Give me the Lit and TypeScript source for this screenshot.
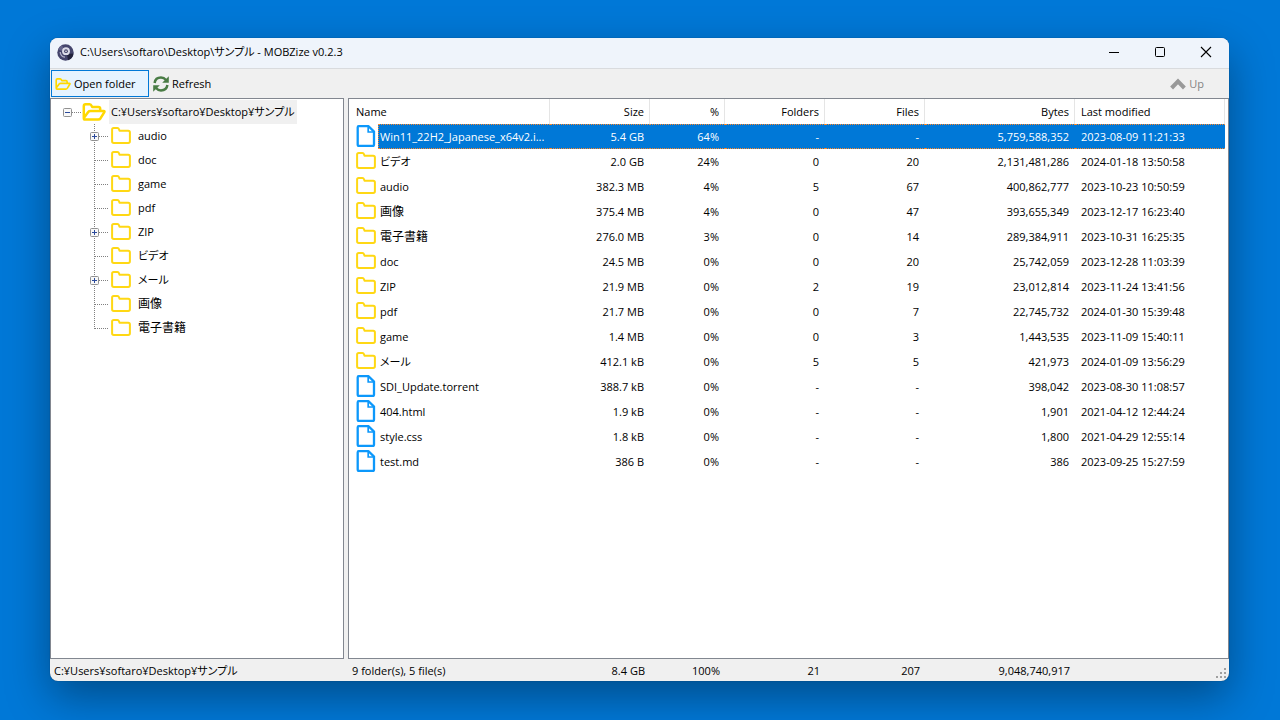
import { LitElement, html, css, svg, nothing } from "lit";
import { customElement, property } from "lit/decorators.js";
import { classMap } from "lit/directives/class-map.js";

interface Entry {
  name: string;
  kind: "file" | "folder";
  size: string;
  percent: string;
  folders: string;
  files: string;
  bytes: string;
  modified: string;
}

const row = (kind: "file" | "folder", ...v: string[]): Entry => ({
  kind,
  name: v[0],
  size: v[1],
  percent: v[2],
  folders: v[3],
  files: v[4],
  bytes: v[5],
  modified: v[6],
});

const ENTRIES: Entry[] = [
  row("file", "Win11_22H2_Japanese_x64v2.i...", "5.4 GB", "64%", "-", "-", "5,759,588,352", "2023-08-09 11:21:33"),
  row("folder", "ビデオ", "2.0 GB", "24%", "0", "20", "2,131,481,286", "2024-01-18 13:50:58"),
  row("folder", "audio", "382.3 MB", "4%", "5", "67", "400,862,777", "2023-10-23 10:50:59"),
  row("folder", "画像", "375.4 MB", "4%", "0", "47", "393,655,349", "2023-12-17 16:23:40"),
  row("folder", "電子書籍", "276.0 MB", "3%", "0", "14", "289,384,911", "2023-10-31 16:25:35"),
  row("folder", "doc", "24.5 MB", "0%", "0", "20", "25,742,059", "2023-12-28 11:03:39"),
  row("folder", "ZIP", "21.9 MB", "0%", "2", "19", "23,012,814", "2023-11-24 13:41:56"),
  row("folder", "pdf", "21.7 MB", "0%", "0", "7", "22,745,732", "2024-01-30 15:39:48"),
  row("folder", "game", "1.4 MB", "0%", "0", "3", "1,443,535", "2023-11-09 15:40:11"),
  row("folder", "メール", "412.1 kB", "0%", "5", "5", "421,973", "2024-01-09 13:56:29"),
  row("file", "SDI_Update.torrent", "388.7 kB", "0%", "-", "-", "398,042", "2023-08-30 11:08:57"),
  row("file", "404.html", "1.9 kB", "0%", "-", "-", "1,901", "2021-04-12 12:44:24"),
  row("file", "style.css", "1.8 kB", "0%", "-", "-", "1,800", "2021-04-29 12:55:14"),
  row("file", "test.md", "386 B", "0%", "-", "-", "386", "2023-09-25 15:27:59"),
];

const TREE = [
  { name: "audio", expandable: true },
  { name: "doc", expandable: false },
  { name: "game", expandable: false },
  { name: "pdf", expandable: false },
  { name: "ZIP", expandable: true },
  { name: "ビデオ", expandable: false },
  { name: "メール", expandable: true },
  { name: "画像", expandable: false },
  { name: "電子書籍", expandable: false },
];

const isKanji = (s: string) => /[\u4e00-\u9fff]/.test(s);

const folderIcon = html`<svg class="icon" width="20" height="20" viewBox="0 0 20 20" aria-hidden="true">
  <path d="M1.1 3.6 Q1.1 2 2.7 2 H6.4 Q7.6 2 8 3.2 L8.5 4.8 H17.2 Q18.9 4.8 18.9 6.5 V15.3 Q18.9 17 17.2 17 H2.8 Q1.1 17 1.1 15.3 Z" fill="#fff" stroke="#ffd814" stroke-width="2" stroke-linejoin="round"/>
</svg>`;

const openFolder = (w: number, h: number) => html`<svg class="icon" width=${w} height=${h} viewBox="0 0 24 18" aria-hidden="true">
  <path d="M1.8 14.5 V3.2 Q1.8 1.3 3.6 1.3 H7.6 Q9 1.3 9.8 3.2 L10.2 4 H16.4 Q18.2 4 18.2 5.8 V8 M1.8 15 L6.2 9 Q7 8 8.4 8 H21.6 Q23 8 22.2 9.3 L18.6 15.2 Q17.7 16.6 16.2 16.6 H3 Q1.8 16.6 1.8 15 Z" fill="none" stroke="#ffd800" stroke-width="2.5" stroke-linejoin="round" stroke-linecap="round"/>
</svg>`;

const fileIcon = html`<svg class="icon" width="20" height="25" viewBox="0 0 20 25" aria-hidden="true">
  <path d="M2.7 2.2 H12.6 L18 7.6 V20.4 Q18 21.8 16.7 21.8 H3 Q1.7 21.8 1.7 20.4 V3.4 Q1.7 2.2 2.7 2.2 Z" fill="#fff" stroke="#0c98fb" stroke-width="2.3" stroke-linejoin="round"/>
  <path d="M12.2 2.6 V8 H17.6" fill="none" stroke="#0c98fb" stroke-width="1.7"/>
</svg>`;

const expander = (x: number, plus: boolean) => svg`
  <rect x=${x + 0.5} y="8.5" width="8" height="8" rx="1" fill="#f8f8f8" stroke="#919191"/>
  <path d="M${x + 2} 12.5 H${x + 7}" stroke="#2b4a9b"/>
  ${plus ? svg`<path d="M${x + 4.5} 10 V15" stroke="#2b4a9b"/>` : nothing}`;

@customElement("folder-tree")
export class FolderTree extends LitElement {
  static styles = css`
    :host {
      display: block;
      padding-top: 1px;
    }
    ul {
      list-style: none;
      margin: 0;
      padding: 0;
    }
    .node {
      display: flex;
      align-items: center;
      height: 24px;
      padding-left: 39px;
    }
    .root {
      padding-left: 11px;
    }
    .guide {
      display: block;
      width: 21px;
      height: 24px;
      margin: 0;
      padding: 0;
      border: 0;
      background: none;
    }
    .guide svg,
    .icon {
      display: block;
      flex: none;
    }
    .root .guide {
      width: 20px;
    }
    .label {
      color: #000;
      text-decoration: none;
      line-height: 24px;
      padding: 0 2px;
      margin-left: 5px;
      white-space: nowrap;
    }
    .root .label {
      background: #f0f0f0;
      margin-left: 3px;
    }
    .kanji {
      font-size: 12px;
    }
  `;

  private guide(last: boolean, expandable: boolean) {
    return html`<svg width="21" height="24" viewBox="0 0 21 24" aria-hidden="true">
      <path d="M4.5 0 V${last ? 13 : 24}" stroke="#808080" stroke-dasharray="1 1"/>
      <path d="M5 12.5 H19" stroke="#808080" stroke-dasharray="1 1"/>
      ${expandable ? expander(0, true) : nothing}
    </svg>`;
  }

  render() {
    return html`
      <div class="node root">
        <button class="guide" aria-label="Collapse">
          <svg width="20" height="24" viewBox="0 0 20 24" aria-hidden="true">
            <path d="M10 12.5 H20" stroke="#808080" stroke-dasharray="1 1"/>
            ${expander(1, false)}
          </svg>
        </button>
        ${openFolder(24, 18)}
        <a class="label" href="#root">C:¥Users¥softaro¥Desktop¥サンプル</a>
      </div>
      <ul>
        ${TREE.map((n, i) => {
          const g = this.guide(i === TREE.length - 1, n.expandable);
          return html`<li class="node">
            ${n.expandable
              ? html`<button class="guide" aria-label="Expand ${n.name}">${g}</button>`
              : html`<span class="guide">${g}</span>`}
            ${folderIcon}
            <a class=${classMap({ label: true, kanji: isKanji(n.name) })} href="#${n.name}">${n.name}</a>
          </li>`;
        })}
      </ul>
    `;
  }
}

@customElement("file-table")
export class FileTable extends LitElement {
  @property({ type: Number }) selected = 0;

  static styles = css`
    :host {
      display: block;
      padding: 0 3px 0 1px;
    }
    table {
      width: 100%;
      table-layout: fixed;
      border-collapse: separate;
      border-spacing: 0;
    }
    .w200 { width: 200px; }
    .w150 { width: 150px; }
    .w100 { width: 100px; }
    .w75 { width: 75px; }
    th,
    td {
      box-sizing: border-box;
      height: 25px;
      line-height: 23px;
      padding: 0 6px;
      text-align: right;
      font-weight: 400;
      white-space: nowrap;
    }
    th {
      border-right: 1px solid #e5e5e5;
      padding-right: 5px;
    }
    .left {
      text-align: left;
    }
    .name {
      text-align: left;
      padding: 0 0 0 6px;
    }
    .cell {
      display: flex;
      align-items: flex-start;
      height: 25px;
    }
    .icon {
      display: block;
      flex: none;
    }
    .folder .icon {
      margin-top: 2px;
    }
    .label {
      box-sizing: border-box;
      flex: 1;
      min-width: 0;
      height: 25px;
      margin-left: 2px;
      padding: 0 2px;
      border: 1px solid transparent;
      border-width: 1px 0;
      overflow: hidden;
    }
    .kanji {
      font-size: 12px;
    }
    .selected td:not(.name) {
      color: #fff;
      background: #0078d7;
      border: 1px dotted #ff8728;
      border-width: 1px 0;
    }
    .selected .label {
      color: #fff;
      background: #0078d7;
      border: 1px dotted #ff8728;
      border-right-width: 0;
      padding-left: 1px;
    }
  `;

  render() {
    return html`
      <table>
        <colgroup>
          <col class="w200" /><col class="w100" /><col class="w75" /><col class="w100" />
          <col class="w100" /><col class="w150" /><col />
        </colgroup>
        <thead>
          <tr>
            <th class="left">Name</th>
            <th>Size</th>
            <th>%</th>
            <th>Folders</th>
            <th>Files</th>
            <th>Bytes</th>
            <th class="left">Last modified</th>
          </tr>
        </thead>
        <tbody>
          ${ENTRIES.map(
            (e, i) => html`<tr class=${classMap({ selected: i === this.selected })}>
              <td class="name">
                <div class="cell ${e.kind}">
                  ${e.kind === "file" ? fileIcon : folderIcon}
                  <span class=${classMap({ label: true, kanji: isKanji(e.name) })}>${e.name}</span>
                </div>
              </td>
              <td>${e.size}</td>
              <td>${e.percent}</td>
              <td>${e.folders}</td>
              <td>${e.files}</td>
              <td>${e.bytes}</td>
              <td class="left">${e.modified}</td>
            </tr>`
          )}
        </tbody>
      </table>
    `;
  }
}

@customElement("app-root")
export class AppRoot extends LitElement {
  static styles = css`
    :host {
      display: flex;
      box-sizing: border-box;
      min-height: 100vh;
      padding: 38px 51px 39px 50px;
      overflow: hidden;
      background: #0078d7;
      color: #000;
      font: 11px/16px "Open Sans", "Noto Sans CJK JP", sans-serif;
      font-feature-settings: "palt";
    }
    button {
      font: inherit;
      font-feature-settings: inherit;
      color: inherit;
      margin: 0;
      background: none;
      border: 0;
    }
    .window {
      flex: 1;
      min-width: 0;
      display: flex;
      flex-direction: column;
      overflow: hidden;
      border-radius: 8px;
      background: #f0f0f0;
      box-shadow: 0 0 1px rgba(0, 0, 0, 0.5), 0 16px 44px rgba(0, 0, 0, 0.36);
    }
    .titlebar {
      display: flex;
      align-items: center;
      box-sizing: border-box;
      height: 31px;
      padding: 0 0 2px 7px;
      background: #eff4fb;
      border-bottom: 1px solid #d9dbde;
    }
    .title {
      flex: 1;
      margin: 0;
      padding-left: 6px;
      font-size: 11px;
      font-weight: 400;
    }
    .caption {
      display: grid;
      place-items: center;
      width: 46px;
      height: 28px;
      padding: 0;
    }
    svg {
      display: block;
      flex: none;
    }
    .toolbar {
      display: flex;
      align-items: center;
      height: 29px;
      padding: 0 21px 0 1px;
    }
    .tool {
      display: flex;
      align-items: center;
      box-sizing: border-box;
      height: 27px;
      gap: 3px;
      padding: 0 4px;
    }
    .open {
      width: 98px;
      padding: 0 3px;
      background: #e5f3ff;
      border: 1px solid #0078d7;
    }
    .up {
      margin-left: auto;
      color: #838383;
    }
    .panes {
      flex: 1;
      display: grid;
      grid-template-columns: 294px 1fr;
      gap: 4px;
    }
    .pane {
      min-width: 0;
      background: #fff;
      border: 1px solid #828790;
    }
    .status {
      display: grid;
      grid-template-columns: 298px 202px 100px 75px 100px 100px 150px 1fr;
      align-items: end;
      height: 22px;
      text-align: right;
    }
    .status span {
      padding: 0 5px 2px 4px;
    }
    .status .start {
      text-align: left;
    }
    .grip {
      justify-self: end;
      align-self: end;
      margin: 0 3px 3px 0;
    }
  `;

  render() {
    return html`
      <main class="window">
        <header class="titlebar">
          <svg width="17" height="17" viewBox="0 0 17 17" aria-hidden="true">
            <circle cx="8.5" cy="8.5" r="8.2" fill="#45456c"/>
            <path d="M8.5 8.5 L1.2 5.6 A8 8 0 0 1 5 1.2 Z" fill="#64648a"/>
            <path d="M10 10 L16.5 9.5 A8 8 0 0 1 11 16.2 Z" fill="#22223c"/>
            <circle cx="9" cy="7.2" r="3.9" fill="#dcdce8"/>
            <circle cx="9" cy="7.2" r="1.9" fill="#45456c"/>
            <circle cx="9" cy="7.2" r="0.8" fill="#fff"/>
            <path d="M3.2 8 Q3.6 12.6 8 13.2" fill="none" stroke="#b4b4cc" stroke-width="1.3"/>
          </svg>
          <h1 class="title">C:\\Users\\softaro\\Desktop\\サンプル - MOBZize v0.2.3</h1>
          <button class="caption" aria-label="Minimize">
            <svg width="12" height="12" viewBox="0 0 12 12"><path d="M1 6.5 H11" stroke="#000"/></svg>
          </button>
          <button class="caption" aria-label="Maximize">
            <svg width="12" height="12" viewBox="0 0 12 12"><rect x="1.5" y="1.5" width="9" height="9" rx="1" fill="none" stroke="#000"/></svg>
          </button>
          <button class="caption" aria-label="Close">
            <svg width="12" height="12" viewBox="0 0 12 12"><path d="M1 1 L11 11 M11 1 L1 11" stroke="#000" stroke-width="1.1"/></svg>
          </button>
        </header>

        <nav class="toolbar">
          <button class="tool open">${openFolder(16, 12)}Open folder</button>
          <button class="tool">
            <svg width="16" height="16" viewBox="0 0 16 16" aria-hidden="true">
              <path d="M1.6 7 Q2.4 1.6 8 1.6 Q11 1.6 13 4 M14.4 9 Q13.6 14.4 8 14.4 Q5 14.4 3 12" fill="none" stroke="#4a7c45" stroke-width="2.5"/>
              <path d="M15.8 0.2 V6.8 H9.2 Z M0.2 15.8 V9.2 H6.8 Z" fill="#4a7c45"/>
            </svg>
            Refresh
          </button>
          <button class="tool up" disabled>
            <svg width="16" height="12" viewBox="0 0 16 12" aria-hidden="true">
              <path d="M1.6 10 L8 3.4 L14.4 10" fill="none" stroke="#999" stroke-width="4"/>
            </svg>
            Up
          </button>
        </nav>

        <section class="panes">
          <folder-tree class="pane"></folder-tree>
          <file-table class="pane"></file-table>
        </section>

        <footer class="status">
          <span class="start">C:¥Users¥softaro¥Desktop¥サンプル</span>
          <span class="start">9 folder(s), 5 file(s)</span>
          <span>8.4 GB</span>
          <span>100%</span>
          <span>21</span>
          <span>207</span>
          <span>9,048,740,917</span>
          <svg class="grip" width="10" height="10" viewBox="0 0 10 10" aria-hidden="true">
            <path d="M8 0h2v2h-2z M4 4h2v2h-2z M8 4h2v2h-2z M0 8h2v2h-2z M4 8h2v2h-2z M8 8h2v2h-2z" fill="#a0a0a0"/>
          </svg>
        </footer>
      </main>
    `;
  }
}
